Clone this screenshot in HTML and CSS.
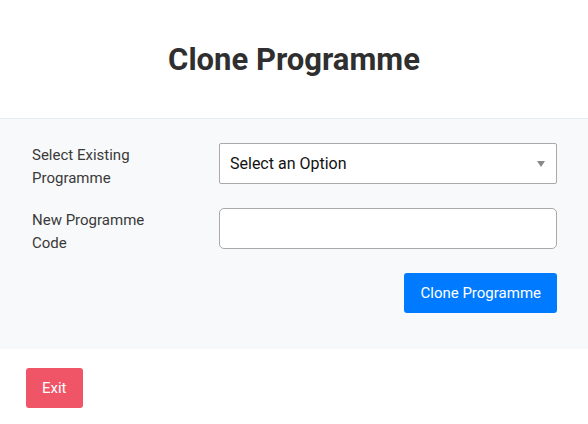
FILE: index.html
```html
<!DOCTYPE html>
<html lang="en">
  <head>
    <meta charset="UTF-8" />
    <meta name="viewport" content="width=device-width, initial-scale=1.0" />
    <title>Clone Programme</title>
    <link rel="stylesheet" href="styles.css">
  </head>
  <body>
    <div class="header">
      <h1>Clone Programme</h1>
    </div>
    <div class="panel">
      <div class="form-row">
        <label for="existing">Select Existing Programme</label>
        <div class="select-wrap">
          <select id="existing">
            <option>Select an Option</option>
          </select>
        </div>
      </div>
      <div class="form-row">
        <label for="code">New Programme Code</label>
        <input type="text" id="code" />
      </div>
      <div class="actions">
        <button class="btn btn-primary">Clone Programme</button>
      </div>
    </div>
    <div class="footer">
      <button class="btn btn-danger">Exit</button>
    </div>
  </body>
</html>
```

FILE: styles.css
```css
body {
  margin: 0;
  font-family: Roboto, "Liberation Sans", sans-serif;
  color: #333;
  background-color: white;
}
.header {
  height: 118px;
  display: flex;
  align-items: center;
  justify-content: center;
  border-bottom: 1px solid #e9ecef;
}
h1 {
  margin: 0;
  font-size: 31px;
  font-weight: bold;
  color: #2f2f2f;
}
.panel {
  background-color: #f8f9fa;
  padding: 24px 31px 36px 32px;
}
.form-row {
  display: grid;
  grid-template-columns: 187px 1fr;
  align-items: start;
  margin-bottom: 18px;
}
label {
  width: 140px;
  padding-top: 1px;
  font-size: 15px;
  line-height: 23px;
  color: #3a3a3a;
}
select,
input {
  width: 100%;
  height: 41px;
  border: 1px solid #a9a9a9;
  border-radius: 4px;
  background-color: white;
  box-sizing: border-box;
  font-family: inherit;
  font-size: 16px;
  color: #111;
}
.select-wrap {
  position: relative;
}
select {
  appearance: none;
  padding: 0 30px 0 10px;
  border-radius: 2px;
}
.select-wrap::after {
  content: "";
  position: absolute;
  right: 12px;
  top: 18px;
  border-left: 4px solid transparent;
  border-right: 4px solid transparent;
  border-top: 6px solid #888;
  pointer-events: none;
}
input {
  padding: 0 10px;
  border-radius: 5px;
}
.actions {
  display: flex;
  justify-content: flex-end;
}
.btn {
  height: 40px;
  padding: 0 16px;
  border: none;
  border-radius: 3px;
  color: white;
  font-family: inherit;
  font-size: 15px;
  cursor: pointer;
}
.btn-primary {
  background-color: #007bff;
}
.btn-danger {
  background-color: #f05467;
}
.footer {
  padding: 19px 26px;
}
```
